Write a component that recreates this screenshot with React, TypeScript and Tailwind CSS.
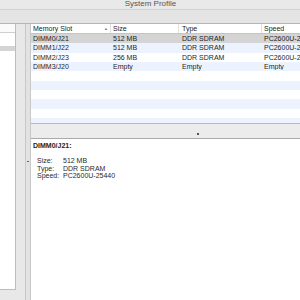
import React from "react";

const rows = [
    { slot: "DIMM0/J21", size: "512 MB", type: "DDR SDRAM", speed: "PC2600U-25440" },
    { slot: "DIMM1/J22", size: "512 MB", type: "DDR SDRAM", speed: "PC2600U-25440" },
    { slot: "DIMM2/J23", size: "256 MB", type: "DDR SDRAM", speed: "PC2600U-25440" },
    { slot: "DIMM3/J20", size: "Empty", type: "Empty", speed: "Empty" },
];

const filler = [0, 1, 2, 3, 4, 5, 6];

const rowBg = (i: number) => {
    if (i === 0) return "bg-[#d4d4d4]";
    return i % 2 === 1 ? "bg-[#edf3fe]" : "bg-white";
};

const Row = ({ i, cells }: { i: number; cells?: string[] }) => {
    return <div className={`flex h-[9.33px] items-center shrink-0 ${rowBg(i)}`}>
        <div className="w-[80px] pl-[2px] whitespace-nowrap">{cells?.[0]}</div>
        <div className="w-[68px] pl-[2px] whitespace-nowrap">{cells?.[1]}</div>
        <div className="w-[83px] pl-[3px] whitespace-nowrap">{cells?.[2]}</div>
        <div className="flex-1 pl-[2px] whitespace-nowrap overflow-hidden">{cells?.[3]}</div>
    </div>
};

export default function App() {
    return <div className="w-[300px] h-[300px] overflow-hidden flex flex-col bg-[#e8e8e8] text-[7px] leading-none text-[#1e1e1e]" style={{ fontFamily: '"Liberation Sans", Arial, sans-serif' }}>
        {/* title bar */}
        <div className="h-[10px] shrink-0 bg-[#e9e9e9] border-b border-[#d2d2d2] flex justify-center items-end overflow-hidden">
            <div className="text-[8px] text-[#555] leading-none mb-[1px] ml-[1px]">System Profile</div>
        </div>
        {/* toolbar */}
        <div className="h-[14px] shrink-0 bg-[#e4e4e4] border-b border-[#b5b5b5]"></div>
        <div className="flex flex-1 min-h-0">
            {/* sidebar */}
            <div className="w-[16px] shrink-0 flex flex-col">
                <div className="h-[266px] bg-white border-r border-b border-[#bdbdbd] flex flex-col">
                    <div className="h-[9px] border-b border-[#cfcfcf] bg-[#fafafa]"></div>
                    <div className="h-[13px]"></div>
                    <div className="h-[5px] bg-[#d4d4d4]"></div>
                </div>
            </div>
            <div className="w-[9px] shrink-0 bg-[#e8e8e8]"></div>
            {/* vertical splitter */}
            <div className="w-[6px] shrink-0 bg-[#e2e2e2] border-l border-r border-[#c8c8c8] flex items-center justify-center">
                <div className="w-[2px] h-[1px] bg-[#666] mt-[-2px]"></div>
            </div>
            {/* right pane */}
            <div className="flex-1 min-w-0 flex flex-col bg-white">
                <div className="h-[100px] shrink-0 flex flex-col overflow-hidden border-b border-[#b9b9b9]">
                    <div className="flex h-[10px] shrink-0 items-center border-b border-[#c4c4c4] bg-white text-[#222]">
                        <div className="w-[80px] pl-[2px] flex items-center border-r border-[#e0e0e0] h-full">
                            <span className="flex-1">Memory Slot</span>
                            <span className="text-[4px] text-[#777] mr-[2px]">▲</span>
                        </div>
                        <div className="w-[68px] pl-[2px] border-r border-[#e0e0e0] h-full flex items-center">Size</div>
                        <div className="w-[83px] pl-[3px] border-r border-[#e0e0e0] h-full flex items-center">Type</div>
                        <div className="flex-1 pl-[2px] h-full flex items-center">Speed</div>
                    </div>
                    {rows.map((r, i) => <Row key={i} i={i} cells={[r.slot, r.size, r.type, r.speed]} />)}
                    {filler.map((f) => <Row key={`f${f}`} i={f + 4} />)}
                </div>
                {/* horizontal splitter */}
                <div className="h-[15px] shrink-0 bg-[#ececec] border-b border-[#a9a9a9] flex items-end">
                    <div className="ml-[166px] mb-[3px] w-[2px] h-[2px] bg-[#555]"></div>
                </div>
                {/* details */}
                <div className="flex-1 bg-white pl-[2px] pt-[2px]">
                    <div className="font-bold h-[8px] flex items-center">DIMM0/J21:</div>
                    <div className="mt-[8px] ml-[4px] flex flex-col text-[#2a2a2a]">
                        {[["Size:", "512 MB"], ["Type:", "DDR SDRAM"], ["Speed:", "PC2600U-25440"]].map(([k, v]) => <div key={k} className="flex h-[7.5px] items-center">
                            <span className="w-[26px]">{k}</span>
                            <span>{v}</span>
                        </div>)}
                    </div>
                </div>
            </div>
        </div>
    </div>
}
